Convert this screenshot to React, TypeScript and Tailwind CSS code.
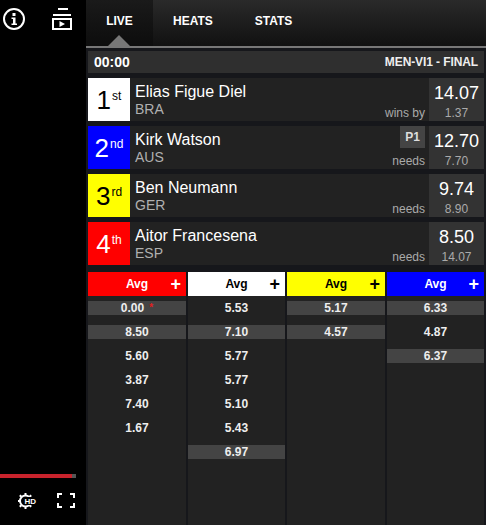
const riders = [
  { pos: "1", suffix: "st", box: "bg-white text-black", name: "Elias Figue Diel", country: "BRA", label: "wins by", score: "14.07", sub: "1.37", badge: false },
  { pos: "2", suffix: "nd", box: "bg-[#0000ff] text-white", name: "Kirk Watson", country: "AUS", label: "needs", score: "12.70", sub: "7.70", badge: true },
  { pos: "3", suffix: "rd", box: "bg-[#ffff00] text-black", name: "Ben Neumann", country: "GER", label: "needs", score: "9.74", sub: "8.90", badge: false },
  { pos: "4", suffix: "th", box: "bg-[#ff0000] text-white", name: "Aitor Francesena", country: "ESP", label: "needs", score: "8.50", sub: "14.07", badge: false },
];

const columns = [
  { head: "bg-[#ff0000] text-white", width: "w-[98px]", cells: [{ v: "0.00", hi: true, star: true }, { v: "8.50", hi: true }, { v: "5.60" }, { v: "3.87" }, { v: "7.40" }, { v: "1.67" }] },
  { head: "bg-white text-black", width: "w-[97px]", cells: [{ v: "5.53" }, { v: "7.10", hi: true }, { v: "5.77" }, { v: "5.77" }, { v: "5.10" }, { v: "5.43" }, { v: "6.97", hi: true }] },
  { head: "bg-[#ffff00] text-black", width: "w-[98px]", cells: [{ v: "5.17", hi: true }, { v: "4.57", hi: true }] },
  { head: "bg-[#0000ff] text-white", width: "w-[97px]", cells: [{ v: "6.33", hi: true }, { v: "4.87" }, { v: "6.37", hi: true }] },
];

function SideBar() {
  return (
    <div className="w-[86px] h-full bg-black flex flex-col shrink-0">
      <div className="flex h-[40px] pt-[7px] pl-[3px]">
        <svg width="22" height="24" viewBox="0 0 22 24" fill="none">
          <circle cx="11" cy="12" r="10" stroke="white" strokeWidth="2" />
          <rect x="9.5" y="6" width="3" height="3" fill="white" />
          <path d="M8.5 10.5H12.5V16.5H14V18H8.5V16.5H10V12H8.5Z" fill="white" />
        </svg>
        <svg className="ml-[27px]" width="22" height="24" viewBox="0 0 22 24" fill="none">
          <rect x="6" y="1" width="10" height="2" fill="white" />
          <rect x="1" y="7" width="18" height="2" fill="white" />
          <rect x="1" y="12" width="18" height="10" stroke="white" strokeWidth="2" />
          <path d="M7.5 14L13 17L7.5 20Z" fill="white" />
        </svg>
      </div>
      <div className="mt-auto flex flex-col">
        <div className="flex h-[4px] w-[76px]">
          <div className="w-[72px] bg-[#c8232c]" />
          <div className="w-[4px] bg-[#555]" />
        </div>
        <div className="flex h-[47px] pt-[15px] pl-[18px]">
          <svg width="18" height="16" viewBox="0 0 18 16" fill="none" overflow="visible">
            <circle cx="7.5" cy="8" r="5.5" stroke="white" strokeWidth="2" />
            <path d="M7.5 0V2M7.5 14V16M1.8 2.3L3.3 3.8M13.2 2.3L11.7 3.8M1.8 13.7L3.3 12.2M13.2 13.7L11.7 12.2M0 8H2" stroke="white" strokeWidth="2" />
            <rect x="6" y="4" width="12" height="8" fill="black" />
            <text x="6.5" y="11" fontSize="8" fontWeight="700" fill="white">HD</text>
          </svg>
          <svg className="ml-[21px]" width="18" height="15" viewBox="0 0 18 15" fill="none">
            <path d="M1 5V1H5M13 1H17V5M17 10V14H13M5 14H1V10" stroke="white" strokeWidth="2" />
          </svg>
        </div>
      </div>
    </div>
  );
}

function Tabs() {
  return (
    <div className="h-[48px] border-b-2 border-[#777] flex bg-gradient-to-b from-[#2a2a2a] to-[#111] text-white text-xs font-bold">
      <div className="relative w-[67px] h-[46px] flex items-center justify-center pb-[4px] bg-gradient-to-b from-[#1a1a1a] to-[#0d0d0d]">
        LIVE
        <div className="absolute bottom-0 left-[22px] w-0 h-0 border-x-[11px] border-x-transparent border-b-[11px] border-b-[#777]" />
      </div>
      <div className="h-[46px] pl-[20px] flex items-center pb-[4px]">HEATS</div>
      <div className="h-[46px] pl-[42px] flex items-center pb-[4px]">STATS</div>
    </div>
  );
}

function RiderRow({ r }: { r: (typeof riders)[number] }) {
  return (
    <div className="h-[43px] flex bg-[#222]">
      <div className={`w-[42px] flex items-center justify-center ${r.box}`}>
        <span className="text-[26px] leading-none">{r.pos}</span>
        <span className="text-xs leading-none mb-[8px] ml-[1px]">{r.suffix}</span>
      </div>
      <div className="flex-1 pl-[5px] pt-[4px]">
        <div className="text-base leading-[19px] text-white">{r.name}</div>
        <div className="text-sm leading-[16px] text-[#b0b0b0]">{r.country}</div>
      </div>
      <div className="relative flex items-end pr-[4px]">
        {r.badge && (
          <div className="absolute top-0 right-[4px] w-[25px] h-[22px] bg-[#444] text-xs font-bold text-[#ddd] flex items-center justify-center">
            P1
          </div>
        )}
        <span className="text-xs leading-[16px] text-[#aaa]">{r.label}</span>
      </div>
      <div className="w-[55px] bg-[#333] flex flex-col items-center pt-[4px]">
        <div className="text-lg leading-[22px] text-white">{r.score}</div>
        <div className="text-xs leading-[18px] text-[#aaa]">{r.sub}</div>
      </div>
    </div>
  );
}

function StatColumn({ c }: { c: (typeof columns)[number] }) {
  return (
    <div className={`${c.width} bg-[#222] h-[253px]`}>
      <div className={`relative h-[24px] flex items-center justify-center text-xs font-bold ${c.head}`}>
        Avg
        <span className="absolute right-[5px] top-[2px] text-lg leading-[20px]">+</span>
      </div>
      <div className="flex flex-col gap-[10px] pt-[5px]">
        {c.cells.map((cell, i) => (
          <div key={i} className={`h-[14px] flex items-center justify-center text-xs font-bold text-[#eee] ${cell.hi ? "bg-[#444]" : ""}`}>
            {cell.v}
            {"star" in cell && cell.star && <span className="ml-[5px] text-[10px] text-[#e02020]">*</span>}
          </div>
        ))}
      </div>
    </div>
  );
}

export default function App() {
  return (
    <div className="flex w-[504px] h-[525px] bg-white overflow-hidden font-['Liberation_Sans',Arial,sans-serif]">
      <SideBar />
      <div className="w-[400px] h-full bg-[#16171b] flex flex-col">
        <Tabs />
        <div className="px-[2px] pt-[3px] flex flex-col">
          <div className="h-[22px] bg-[#2f2f2f] flex items-center justify-between pl-[6px] pr-[6px] text-white font-bold">
            <span className="text-sm">00:00</span>
            <span className="text-xs tracking-[-0.1px] text-[#eee]">MEN-VI1 - FINAL</span>
          </div>
          <div className="flex flex-col gap-[5px] mt-[5px]">
            {riders.map((r) => (
              <RiderRow key={r.pos} r={r} />
            ))}
          </div>
          <div className="flex gap-[2px] mt-[7px]">
            {columns.map((c, i) => (
              <StatColumn key={i} c={c} />
            ))}
          </div>
        </div>
      </div>
    </div>
  );
}
